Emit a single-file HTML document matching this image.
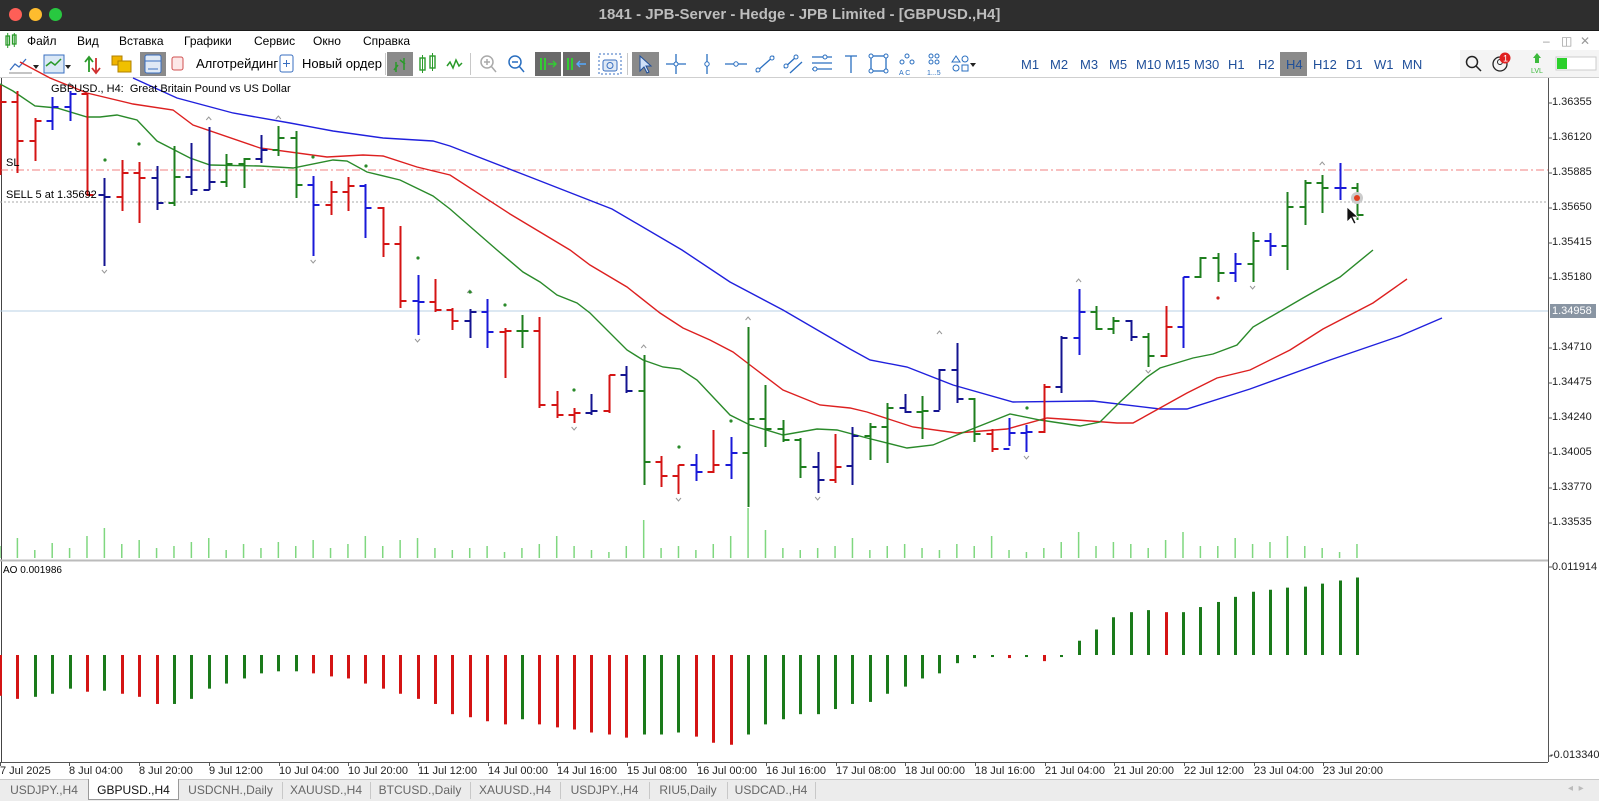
<!DOCTYPE html>
<html><head><meta charset="utf-8">
<style>
*{margin:0;padding:0;box-sizing:border-box}
body{width:1599px;height:801px;position:relative;overflow:hidden;background:#fff;font-family:"Liberation Sans","DejaVu Sans",sans-serif;font-size:11px;color:#000}
.abs{position:absolute;white-space:nowrap}
#title{left:0;top:0;width:1599px;height:31px;background:#2e2e2e;border-bottom:1px solid #1a1a1a}
#title .t{left:0;width:1599px;text-align:center;top:6px;color:#bdbdbd;font-weight:bold;font-size:15px}
.dot{width:13px;height:13px;border-radius:50%;top:8px}
#menu{top:31px;left:0;width:1599px;height:19px;background:#fff}
#menu span{position:absolute;top:3px;font-size:12px}
#tb{top:50px;left:0;width:1599px;height:28px;background:#fff;border-bottom:1px solid #cfcfcf}
.tf{position:absolute;top:7px;font-size:13px;color:#1f4f9a}
.act{position:absolute;background:#8a8a8a;top:2px;height:24px}
.sep{position:absolute;top:3px;width:1px;height:22px;background:#c8c8c8}
.pl{position:absolute;left:1552px;font-size:11px;color:#222}
.tl{position:absolute;top:765px;font-size:11px;color:#222}
#tabs{left:0;top:779px;width:1599px;height:22px;background:#ececec;border-top:1px solid #c8c8c8}
.tab{position:absolute;top:3px;font-size:12px;color:#666;text-align:center}
.tsep{position:absolute;top:2px;width:1px;height:17px;background:#c8c8c8}
</style></head><body>
<div id="title" class="abs">
 <div class="abs dot" style="left:9px;background:#fe5f57"></div>
 <div class="abs dot" style="left:29px;background:#febc2e"></div>
 <div class="abs dot" style="left:49px;background:#28c840"></div>
 <div class="abs t">1841 - JPB-Server - Hedge - JPB Limited - [GBPUSD.,H4]</div>
</div>
<div id="menu" class="abs">
 <svg class="abs" style="left:4px;top:2px" width="14" height="15"><rect x="2" y="3" width="3.5" height="9" fill="none" stroke="#2a9a2a" stroke-width="1.3"/><rect x="8.5" y="2" width="3.5" height="9" fill="none" stroke="#2a9a2a" stroke-width="1.3"/><path d="M3.7 0v15M10.3 0v14" stroke="#2a9a2a"/></svg>
 <span style="left:27px">Файл</span><span style="left:77px">Вид</span><span style="left:119px">Вставка</span><span style="left:184px">Графики</span><span style="left:254px">Сервис</span><span style="left:313px">Окно</span><span style="left:363px">Справка</span>
 <span style="left:1543px;color:#999">–</span><span style="left:1561px;color:#999">◫</span><span style="left:1580px;color:#999">✕</span>
</div>
<div id="tb" class="abs">
 <svg class="abs" style="left:0;top:0" width="1010" height="28">
  <path d="M10 20l5-6 4 3 7-8" fill="none" stroke="#3a6fc0" stroke-width="1.3"/><path d="M9 23h23" stroke="#888"/><path d="M33 15l3 4 3-4z" fill="#222"/>
  <rect x="44" y="5" width="20" height="18" fill="#dbe8f6" stroke="#3a6fc0"/><path d="M46 16l5-4 4 3 6-6" fill="none" stroke="#2a9a2a" stroke-width="1.5"/><path d="M65 15l3 4 3-4z" fill="#222"/>
  <path d="M89 22V8m-4 4l4-5 4 5" fill="none" stroke="#2a9a2a" stroke-width="1.8"/><path d="M96 8v14m-4-4l4 5 4-5" fill="none" stroke="#d03030" stroke-width="1.8"/>
  <rect x="112" y="6" width="10" height="9" fill="#f0b400" stroke="#b08000"/><rect x="118" y="11" width="13" height="11" fill="#f0c000" stroke="#b08000"/>
  <rect x="140" y="2" width="26" height="24" fill="#8a8a8a"/><rect x="145" y="5" width="16" height="18" rx="2" fill="#dfe9f5" stroke="#3a6fc0"/><path d="M145 11h16M148 19h10" stroke="#3a6fc0"/>
  <rect x="172" y="7" width="11" height="13" rx="2" fill="#fde8e8" stroke="#d05050"/>
  <rect x="280" y="5" width="13" height="17" rx="2" fill="#fff" stroke="#3a6fc0"/><path d="M286.5 10v7M283 13.5h7" stroke="#3a6fc0"/>
  <line x1="385.5" y1="3" x2="385.5" y2="25" stroke="#c8c8c8"/>
  <rect x="387" y="2" width="26" height="24" fill="#8a8a8a"/><path d="M394 20l4-5M400 10l5 4M396 22V12M404 20V8" stroke="#2a9a2a" stroke-width="1.5"/>
  <rect x="420" y="8" width="5" height="12" fill="none" stroke="#2a9a2a" stroke-width="1.4"/><rect x="430" y="6" width="5" height="12" fill="none" stroke="#2a9a2a" stroke-width="1.4"/><path d="M422.5 5v18M432.5 3v18" stroke="#2a9a2a"/>
  <path d="M447 16l3-4 3 6 3-8 3 6 3-3" fill="none" stroke="#2a9a2a" stroke-width="1.5"/>
  <line x1="470.5" y1="3" x2="470.5" y2="25" stroke="#c8c8c8"/>
  <circle cx="487" cy="12" r="6" fill="none" stroke="#aaa" stroke-width="1.5"/><path d="M491 16l5 6M484 12h6M487 9v6" stroke="#aaa" stroke-width="1.5"/>
  <circle cx="515" cy="12" r="6" fill="none" stroke="#2a6fc0" stroke-width="1.5"/><path d="M519 16l5 6M512 12h6" stroke="#2a6fc0" stroke-width="1.5"/>
  <rect x="535" y="2" width="26" height="24" fill="#6a6a6a"/><path d="M541 8v12M545 8v12" stroke="#3c3" stroke-width="2"/><path d="M548 14h8m-3-3l3 3-3 3" fill="none" stroke="#3c3" stroke-width="1.4"/>
  <rect x="563" y="2" width="27" height="24" fill="#6a6a6a"/><path d="M568 8v12M572 8v12" stroke="#3c3" stroke-width="2"/><path d="M586 14h-9m3-3l-3 3 3 3" fill="none" stroke="#5af" stroke-width="1.4"/>
  <rect x="599" y="4" width="22" height="20" fill="none" stroke="#3a6fc0" stroke-dasharray="2 2"/><rect x="603" y="10" width="14" height="11" rx="2" fill="#dfe9f5" stroke="#3a6fc0"/><circle cx="610" cy="15.5" r="3" fill="none" stroke="#3a6fc0"/>
  <line x1="627.5" y1="3" x2="627.5" y2="25" stroke="#c8c8c8"/>
  <rect x="632" y="2" width="27" height="24" fill="#8a8a8a"/><path d="M640 6l0 15 4-4 3 6 2-1-3-6 5 0z" fill="#cfe0f8" stroke="#1f4f9a"/>
  <path d="M676 4v20M666 14h20" stroke="#2a6fc0" stroke-width="1.3"/><circle cx="676" cy="14" r="2" fill="#fff" stroke="#2a6fc0"/>
  <path d="M707 4v20" stroke="#2a6fc0" stroke-width="1.3"/><circle cx="707" cy="14" r="2.2" fill="#fff" stroke="#2a6fc0"/>
  <path d="M725 14h22" stroke="#2a6fc0" stroke-width="1.3"/><circle cx="736" cy="14" r="2.2" fill="#fff" stroke="#2a6fc0"/>
  <path d="M756 22l18-16" stroke="#2a6fc0" stroke-width="1.3"/><circle cx="758" cy="20" r="2" fill="#fff" stroke="#2a6fc0"/><circle cx="772" cy="8" r="2" fill="#fff" stroke="#2a6fc0"/>
  <path d="M784 18l12-11M790 23l12-11" stroke="#2a6fc0" stroke-width="1.3"/><circle cx="786" cy="16" r="2" fill="#fff" stroke="#2a6fc0"/><circle cx="796" cy="7" r="2" fill="#fff" stroke="#2a6fc0"/>
  <path d="M812 7h20M812 13h20M812 19h20" stroke="#2a6fc0" stroke-width="1.3"/><circle cx="825" cy="7" r="2" fill="#fff" stroke="#2a6fc0"/><circle cx="815" cy="19" r="2" fill="#fff" stroke="#2a6fc0"/>
  <path d="M845 6h12M851 6v17" stroke="#2a6fc0" stroke-width="1.3"/>
  <rect x="871" y="6" width="15" height="15" fill="none" stroke="#2a6fc0" stroke-width="1.3"/><circle cx="871" cy="6" r="2" fill="#fff" stroke="#2a6fc0"/><circle cx="886" cy="21" r="2" fill="#fff" stroke="#2a6fc0"/><circle cx="886" cy="6" r="2" fill="#fff" stroke="#2a6fc0"/><circle cx="871" cy="21" r="2" fill="#fff" stroke="#2a6fc0"/>
  <circle cx="907" cy="6" r="2" fill="none" stroke="#2a6fc0"/><circle cx="902" cy="12" r="2" fill="none" stroke="#2a6fc0"/><circle cx="912" cy="12" r="2" fill="none" stroke="#2a6fc0"/><text x="899" y="25" font-size="7" fill="#2a6fc0">A  C</text>
  <circle cx="931" cy="6" r="2" fill="none" stroke="#2a6fc0"/><circle cx="937" cy="6" r="2" fill="none" stroke="#2a6fc0"/><circle cx="931" cy="12" r="2" fill="none" stroke="#2a6fc0"/><circle cx="937" cy="12" r="2" fill="none" stroke="#2a6fc0"/><text x="927" y="25" font-size="7" fill="#2a6fc0">1...5</text>
  <path d="M952 12l4-6 4 6z" fill="none" stroke="#2a6fc0"/><circle cx="965" cy="9" r="3" fill="none" stroke="#2a6fc0"/><circle cx="956" cy="18" r="3" fill="none" stroke="#2a6fc0"/><rect x="962" y="15" width="6" height="6" fill="none" stroke="#2a6fc0"/><path d="M970 13l3 4 3-4z" fill="#222"/>
  <line x1="1010.5" y1="3" x2="1010.5" y2="25" stroke="#c8c8c8"/>
 </svg>
 <span class="abs" style="left:196px;top:6px;font-size:13px">Алготрейдинг</span>
 <span class="abs" style="left:302px;top:6px;font-size:13px">Новый ордер</span>
 <div class="act" style="left:1280px;width:27px"></div>
 <span class="tf" style="left:1021px">M1</span><span class="tf" style="left:1050px">M2</span><span class="tf" style="left:1080px">M3</span><span class="tf" style="left:1109px">M5</span><span class="tf" style="left:1136px">M10</span><span class="tf" style="left:1165px">M15</span><span class="tf" style="left:1194px">M30</span><span class="tf" style="left:1228px">H1</span><span class="tf" style="left:1258px">H2</span><span class="tf" style="left:1286px">H4</span><span class="tf" style="left:1313px">H12</span><span class="tf" style="left:1346px">D1</span><span class="tf" style="left:1374px">W1</span><span class="tf" style="left:1402px">MN</span>
 <div class="abs" style="left:1460px;top:0;width:139px;height:27px;background:#f4f4f4"></div>
 <svg class="abs" style="left:1462px;top:0" width="137" height="28">
  <circle cx="10" cy="12" r="5.5" fill="none" stroke="#222" stroke-width="1.5"/><path d="M14 16l5 5" stroke="#222" stroke-width="1.5"/>
  <circle cx="38" cy="14" r="7" fill="none" stroke="#222" stroke-width="1.3"/><circle cx="38" cy="12" r="2.5" fill="none" stroke="#222"/><circle cx="43" cy="8" r="5.5" fill="#e02020"/><text x="41" y="11.5" font-size="9" fill="#fff" font-family="Liberation Sans">1</text>
  <path d="M75 3l4 5h-2v5h-4V8h-2z" fill="#3cba3c"/><text x="69" y="23" font-size="7" fill="#3cba3c" font-family="Liberation Sans">LVL</text>
  <rect x="94" y="7" width="40" height="13" fill="#fff" stroke="#ccc"/><rect x="95" y="8" width="10" height="11" fill="#2bd02b"/>
 </svg>
</div>

<svg class="abs" id="ch" style="left:0;top:0" width="1599" height="801"></svg>

<span class="abs" style="left:51px;top:83px;font-size:11px">GBPUSD., H4:&nbsp; Great Britain Pound vs US Dollar</span>
<span class="abs" style="left:6px;top:157px;font-size:11px">SL</span>
<span class="abs" style="left:6px;top:189px;font-size:11px">SELL 5 at 1.35692</span>
<span class="abs" style="left:3px;top:565px;font-size:10px">AO 0.001986</span>

<span class="pl" style="top:96px">1.36355</span><span class="pl" style="top:131px">1.36120</span><span class="pl" style="top:166px">1.35885</span><span class="pl" style="top:201px">1.35650</span><span class="pl" style="top:236px">1.35415</span><span class="pl" style="top:271px">1.35180</span>
<div class="abs" style="left:1550px;top:304px;width:46px;height:14px;background:#8995a3"></div><span class="pl" style="top:305px;color:#fff">1.34958</span>
<span class="pl" style="top:341px">1.34710</span><span class="pl" style="top:376px">1.34475</span><span class="pl" style="top:411px">1.34240</span><span class="pl" style="top:446px">1.34005</span><span class="pl" style="top:481px">1.33770</span><span class="pl" style="top:516px">1.33535</span>
<span class="pl" style="top:561px">0.011914</span><span class="pl" style="top:749px;left:1550px">-0.013340</span>

<span class="tl" style="left:0">7 Jul 2025</span><span class="tl" style="left:69px">8 Jul 04:00</span><span class="tl" style="left:139px">8 Jul 20:00</span><span class="tl" style="left:209px">9 Jul 12:00</span><span class="tl" style="left:279px">10 Jul 04:00</span><span class="tl" style="left:348px">10 Jul 20:00</span><span class="tl" style="left:418px">11 Jul 12:00</span><span class="tl" style="left:488px">14 Jul 00:00</span><span class="tl" style="left:557px">14 Jul 16:00</span><span class="tl" style="left:627px">15 Jul 08:00</span><span class="tl" style="left:697px">16 Jul 00:00</span><span class="tl" style="left:766px">16 Jul 16:00</span><span class="tl" style="left:836px">17 Jul 08:00</span><span class="tl" style="left:905px">18 Jul 00:00</span><span class="tl" style="left:975px">18 Jul 16:00</span><span class="tl" style="left:1045px">21 Jul 04:00</span><span class="tl" style="left:1114px">21 Jul 20:00</span><span class="tl" style="left:1184px">22 Jul 12:00</span><span class="tl" style="left:1254px">23 Jul 04:00</span><span class="tl" style="left:1323px">23 Jul 20:00</span>

<div id="tabs" class="abs">
 <div class="abs" style="left:88px;top:-1px;width:91px;height:21px;background:#fff;border:1px solid #999;border-top:none"></div>
 <span class="tab" style="left:0;width:88px">USDJPY.,H4</span>
 <span class="tab" style="left:88px;width:91px;color:#111">GBPUSD.,H4</span>
 <span class="tab" style="left:179px;width:103px">USDCNH.,Daily</span><div class="tsep" style="left:282px"></div>
 <span class="tab" style="left:282px;width:88px">XAUUSD.,H4</span><div class="tsep" style="left:370px"></div>
 <span class="tab" style="left:370px;width:100px">BTCUSD.,Daily</span><div class="tsep" style="left:470px"></div>
 <span class="tab" style="left:470px;width:90px">XAUUSD.,H4</span><div class="tsep" style="left:560px"></div>
 <span class="tab" style="left:560px;width:89px">USDJPY.,H4</span><div class="tsep" style="left:649px"></div>
 <span class="tab" style="left:649px;width:78px">RIU5,Daily</span><div class="tsep" style="left:727px"></div>
 <span class="tab" style="left:727px;width:88px">USDCAD.,H4</span><div class="tsep" style="left:815px"></div>
 <span class="abs" style="left:1568px;top:3px;color:#bbb;font-size:10px">◂&nbsp;&nbsp;▸</span>
</div>

<script>
var s='';
function L(x1,y1,x2,y2,c,w,extra){s+='<line x1="'+x1+'" y1="'+y1+'" x2="'+x2+'" y2="'+y2+'" stroke="'+c+'" stroke-width="'+(w||1)+'" '+(extra||'')+'/>';}
// frame
L(1.5,78,1.5,762,'#444');L(1548.5,78,1548.5,762,'#555');L(0,762.5,1548,762.5,'#555');
L(0,560.5,1548,560.5,'#bbb',2);
// horizontal lines
L(0,311,1548,311,'#b8d0e4');
L(0,170,1548,170,'#f08080',1,'stroke-dasharray="8 3 2 3"');
L(0,202,1548,202,'#aaa',1,'stroke-dasharray="2 2"');
// price axis ticks
[103,138,173,208,243,278,348,383,418,453,488,523,567,756].forEach(function(y){L(1548,y,1552,y,'#555')});
for(var k=0;k<20;k++){var tx=69*k+ (k?0:0);}
[0,69,139,209,279,348,418,488,557,627,697,766,836,905,975,1045,1114,1184,1254,1323].forEach(function(x){L(x+0.5,762,x+0.5,766,'#555')});
// volumes
var vol=[12,20,8,15,10,22,30,14,18,10,12,16,20,8,14,10,16,12,18,10,14,22,12,18,20,10,8,10,12,6,10,14,22,12,8,6,12,38,10,12,8,14,22,50,28,10,8,10,12,20,8,12,14,10,8,14,12,22,8,6,10,16,26,12,16,14,10,18,26,12,12,20,14,16,22,12,10,6,14];
var X=function(i){return i*17.397;};
for(var i=0;i<79;i++){L(X(i),558,X(i),558-vol[i],'#7fd77f',1.5);}
// MAs
function P(pts,c){s+='<polyline fill="none" stroke="'+c+'" stroke-width="1.4" points="'+pts+'"/>';}
P('133,78 177,98 233,113 290,123 333,131 383,138 433,141 450,146 530,177 612,209 682,250 730,282 783,310 850,349 870,360 907,367 953,385 1013,402 1093,401 1160,409 1187,409 1250,389 1330,360 1400,336 1442,318','#2020dd');
P('20,62 50,78 87,93 133,104 173,110 193,125 260,148 327,157 363,155 383,156 417,167 450,175 510,214 570,250 590,265 627,287 660,313 683,328 710,340 733,352 750,365 783,390 820,405 850,408 867,412 913,427 957,433 1007,429 1047,418 1077,420 1117,423 1133,423 1160,408 1187,393 1217,378 1250,370 1290,350 1323,329 1373,303 1407,279','#dd2020');
P('0,84 13,91 35,106 57,108 87,117 100,117 117,115 137,120 157,141 190,158 210,165 260,166 293,168 333,160 347,161 367,172 400,180 433,196 450,209 497,250 523,272 540,282 557,295 577,303 590,313 627,350 643,360 663,367 680,369 697,380 730,415 750,425 783,435 817,429 837,430 867,438 907,448 933,445 957,435 1010,414 1040,420 1080,426 1100,422 1120,402 1147,377 1160,368 1193,358 1213,354 1237,345 1253,327 1303,298 1340,277 1373,250','#2a8a2a');
// bars
var C={g:'#1f7f1f',r:'#d41414',b:'#1a1ad8',n:'#141490'};
var B=[[85,175,102,102,'r'],[91,173,102,141,'r'],[118,161,141,121,'r'],[97,130,121,107,'b'],[91,121,107,94,'b'],[93,196,94,195,'r'],[178,266,195,197,'n'],[160,211,197,173,'r'],[162,223,173,178,'r'],[166,210,178,203,'n'],
[146,206,203,177,'g'],[143,195,177,190,'n'],[127,190,190,182,'n'],[154,187,182,164,'g'],[158,188,164,159,'g'],[135,163,159,150,'n'],[126,156,150,138,'g'],[131,198,138,185,'g'],[176,256,185,205,'b'],[181,215,205,192,'r'],
[177,211,192,186,'r'],[184,238,186,208,'b'],[207,257,208,244,'r'],[226,308,244,301,'r'],[275,335,301,302,'b'],[279,312,302,310,'r'],[308,330,310,321,'r'],[309,338,321,312,'n'],[299,348,312,332,'b'],[328,378,332,331,'r'],
[315,348,331,331,'g'],[317,408,331,405,'r'],[391,418,405,415,'r'],[408,423,415,413,'r'],[394,415,413,411,'n'],[375,413,411,375,'r'],[366,393,375,391,'n'],[355,485,391,462,'g'],[456,487,462,476,'r'],[465,494,476,465,'r'],
[454,481,465,472,'b'],[430,473,472,465,'r'],[437,479,465,453,'b'],[327,507,453,419,'g'],[385,447,419,429,'g'],[420,442,429,440,'g'],[438,478,440,467,'g'],[452,493,467,480,'n'],[434,483,480,467,'r'],[427,485,466,436,'n'],
[423,460,436,427,'g'],[403,463,427,408,'g'],[394,413,408,412,'n'],[396,439,412,411,'g'],[369,410,411,370,'n'],[343,403,370,399,'n'],[398,442,399,434,'g'],[429,452,434,449,'r'],[418,446,449,433,'b'],[425,452,433,432,'b'],
[384,433,432,387,'r'],[336,393,387,338,'n'],[289,355,338,312,'b'],[306,330,312,329,'g'],[317,334,329,321,'g'],[320,341,321,337,'n'],[333,367,337,356,'g'],[306,357,356,327,'r'],[277,348,327,277,'b'],[257,278,277,258,'g'],
[253,282,258,273,'g'],[253,282,273,264,'b'],[232,282,264,241,'g'],[233,256,241,246,'b'],[192,270,246,207,'g'],[180,225,207,183,'g'],[175,213,183,188,'g'],[163,200,188,188,'b'],[183,220,188,215,'g']];
B.forEach(function(b,i){var x=Math.round(X(i))+0.5,c=C[b[4]];L(x,b[0],x,b[1],c,2);L(x-6,b[2],x,b[2],c,2);L(x,b[3],x+6,b[3],c,2);});
// fractals
function up(i,y){var x=X(i);s+='<path d="M'+(x-2.5)+' '+(y+3)+'L'+x+' '+y+'L'+(x+2.5)+' '+(y+3)+'" fill="none" stroke="#999"/>';}
function dn(i,y){var x=X(i);s+='<path d="M'+(x-2.5)+' '+y+'L'+x+' '+(y+3)+'L'+(x+2.5)+' '+y+'" fill="none" stroke="#999"/>';}
up(4,83);up(12,117);up(16,116);up(27,290);up(37,345);up(43,317);up(54,331);up(62,279);up(76,162);
dn(6,270);dn(18,260);dn(24,339);dn(33,427);dn(39,498);dn(47,497);dn(59,456);dn(66,370);dn(72,286);
function dt(x,y,c){s+='<circle cx="'+x+'" cy="'+y+'" r="1.6" fill="'+(c||'#2a8a2a')+'"/>';}
dt(105,160);dt(139,144);dt(313,157);dt(366,166);dt(418,258);dt(470,292);dt(505,305);dt(574,390);dt(679,447);dt(731,421);dt(1027,408);dt(1218,298,'#d02020');
// order marker + cursor
s+='<circle cx="1357" cy="198" r="6" fill="#ccc"/><circle cx="1357" cy="198" r="3" fill="#e04020"/>';
s+='<path d="M1347 207v15l4-4 3 6 2-1-3-6h5z" fill="#111" stroke="#fff" stroke-width="0.8"/>';
// AO
var ao=[682,685,683,680,675,678,677,680,683,690,690,685,675,670,665,660,658,658,660,663,665,670,675,680,685,690,700,703,707,710,705,710,713,715,718,720,723,720,720,718,722,728,730,720,710,705,700,700,695,690,688,680,673,665,660,650,645,644,645,644,648,644,628,617,605,600,598,600,600,595,590,585,580,578,576,575,572,569,566];
var cols=['r','r','r','r','g','r','g','r','r','r'];
for(var i=0;i<79;i++){var y=655+(ao[i]-642)*1.02;var col;if(i==0)col='#d41414';else col=(ao[i]<ao[i-1]||(ao[i]==ao[i-1]))?'#1a7a1a':'#d41414';if(i==4||i==6)col='#1a7a1a';var x=Math.round(X(i))+0.5;if(Math.abs(y-655)<1.5){L(x-1,655,x+1,655,col,2);}else L(x,655,x,y,col,3);}
document.getElementById('ch').innerHTML=s;
</script>
</body></html>
